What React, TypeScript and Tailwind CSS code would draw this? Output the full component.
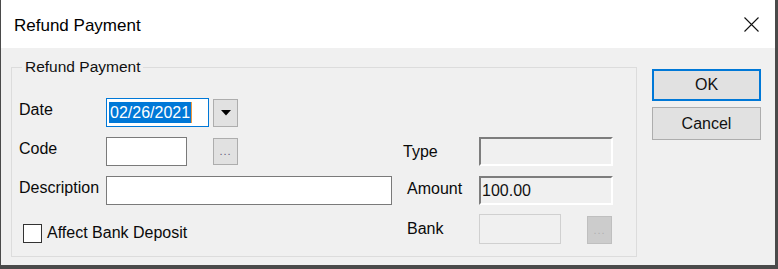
import React from "react";

function Dots({ disabled }: { disabled?: boolean }) {
  return (
    <span
      className={
        "text-[11px] leading-none tracking-[1px] " +
        (disabled ? "text-[#b0b0b0]" : "text-[#5a5a78]")
      }
    >
      ...
    </span>
  );
}

export default function App() {
  const label = "text-[16px] leading-none text-[#0a0a0a]";
  return (
    <div className="w-[778px] h-[269px] bg-[#4a4a4a] font-['Liberation_Sans',Arial,sans-serif]">
      <div className="ml-[1px] w-[774px] h-[265px] bg-[#f0f0f0] flex flex-col">
        {/* Title bar */}
        <div className="h-[48px] bg-white flex items-center justify-between pl-[13px] pr-[16px] shrink-0">
          <span className="text-[17px] text-black mt-[3px]">Refund Payment</span>
          <svg width="15" height="15" viewBox="0 0 15 15" className="mt-[1px]">
            <path d="M0.5 0.5 L14.5 14.5 M14.5 0.5 L0.5 14.5" stroke="#111" strokeWidth="1.1" fill="none" />
          </svg>
        </div>
        {/* Body */}
        <div className="flex pt-[19px] pl-[10px]">
          {/* Group box */}
          <div className="relative w-[626px] h-[190px] border border-[#dcdcdc] pt-[30px] shrink-0">
            <span className="absolute left-[10px] top-[-10px] bg-[#f0f0f0] px-[3px] text-[15.5px] leading-[18px] text-[#111]">
              Refund Payment
            </span>
            {/* Row 1 */}
            <div className="flex items-center pl-[7px] h-[29px]">
              <span className={label + " w-[87px] pb-[6px]"}>Date</span>
              <div className="w-[103px] h-[29px] border border-[#0078d7] bg-white flex items-center pl-[2px]">
                <span className="bg-[#0078d7] text-white text-[16px] leading-[21px] px-[1px]">02/26/2021</span>
                <span className="w-[1px] h-[21px] bg-[#f09a3e]"></span>
              </div>
              <div className="ml-[4px] w-[25px] h-[28px] bg-[#e1e1e1] border border-[#adadad] flex items-center justify-center">
                <svg width="10" height="6" viewBox="0 0 10 6">
                  <path d="M0 0 L10 0 L5 5.5 Z" fill="#000" />
                </svg>
              </div>
            </div>
            {/* Row 2 */}
            <div className="flex items-center mt-[10px] h-[29px]">
              <div className="w-[391px] shrink-0 flex items-center pl-[7px]">
                <span className={label + " w-[87px] pb-[6px]"}>Code</span>
                <div className="w-[81px] h-[29px] border border-[#7a7a7a] bg-white"></div>
                <div className="ml-[26px] w-[25px] h-[27px] bg-[#e1e1e1] border border-[#adadad] flex items-end justify-center pb-[7px]">
                  <Dots />
                </div>
              </div>
              <span className={label + " w-[76px]"}>Type</span>
              <div className="w-[134px] h-[29px] bg-[#f0f0f0] border-2 border-t-[#7d7d7d] border-l-[#7d7d7d] border-b-white border-r-white"></div>
            </div>
            {/* Row 3 */}
            <div className="flex items-center mt-[10px] h-[29px]">
              <div className="w-[391px] shrink-0 flex items-center pl-[7px]">
                <span className={label + " w-[87px] pb-[6px]"}>Description</span>
                <div className="w-[286px] h-[29px] border border-[#7a7a7a] bg-white"></div>
              </div>
              <span className={label + " w-[76px] pl-[4px] pb-[4px]"}>Amount</span>
              <div className="w-[134px] h-[29px] bg-[#f0f0f0] border-2 border-t-[#7d7d7d] border-l-[#7d7d7d] border-b-white border-r-white flex items-center pl-[1px]">
                <span className="text-[16px] leading-none text-[#111]">100.00</span>
              </div>
            </div>
            {/* Row 4 */}
            <div className="flex items-start mt-[9px]">
              <div className="w-[391px] shrink-0 flex items-center pl-[11px] mt-[9px] h-[20px]">
                <div className="w-[19px] h-[19px] border border-[#333] bg-white"></div>
                <span className={label + " ml-[5px]"}>Affect Bank Deposit</span>
              </div>
              <div className="flex items-start">
                <span className={label + " w-[76px] pl-[4px] h-[30px] flex items-center"}>Bank</span>
                <div className="w-[82px] h-[30px] border border-[#d0d0d0] bg-[#f0f0f0]"></div>
                <div className="ml-[26px] mt-[2px] w-[25px] h-[28px] bg-[#cccccc] border border-[#bfbfbf] flex items-end justify-center pb-[7px]">
                  <Dots disabled />
                </div>
              </div>
            </div>
          </div>
          {/* Buttons */}
          <div className="ml-[15px] mt-[2px] flex flex-col gap-[6px]">
            <div className="w-[109px] h-[32px] bg-[#e1e1e1] border-2 border-[#0078d7] flex items-center justify-center text-[16px] text-[#111]">
              OK
            </div>
            <div className="w-[109px] h-[33px] bg-[#e1e1e1] border border-[#adadad] flex items-center justify-center text-[16px] text-[#111]">
              Cancel
            </div>
          </div>
        </div>
      </div>
    </div>
  );
}
